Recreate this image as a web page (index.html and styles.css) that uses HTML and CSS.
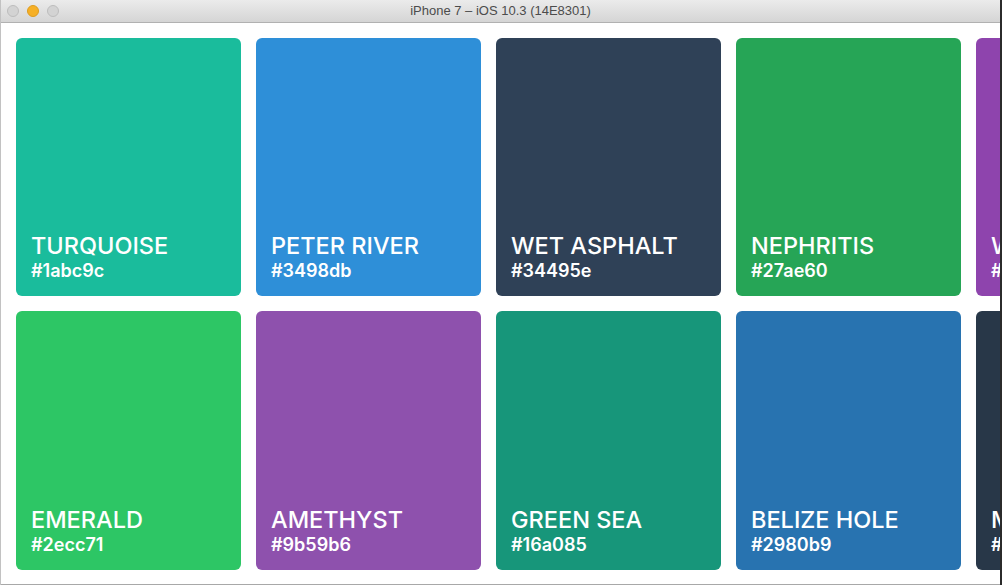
FILE: index.html
```html
<!DOCTYPE html>
<html>
<head>
<meta charset="utf-8">
<title>Flat UI Colors</title>
<link rel="stylesheet" href="styles.css">
</head>
<body>
<div class="window">
  <div class="titlebar">
    <div class="lights">
      <span class="light"></span>
      <span class="light active"></span>
      <span class="light"></span>
    </div>
    <div class="title">iPhone 7 – iOS 10.3 (14E8301)</div>
  </div>
  <div class="content">
    <div class="grid">
      <div class="card turquoise"><div class="name">TURQUOISE</div><div class="hex">#1abc9c</div></div>
      <div class="card peter-river"><div class="name">PETER RIVER</div><div class="hex">#3498db</div></div>
      <div class="card wet-asphalt"><div class="name">WET ASPHALT</div><div class="hex">#34495e</div></div>
      <div class="card nephritis"><div class="name">NEPHRITIS</div><div class="hex">#27ae60</div></div>
      <div class="card wisteria"><div class="name">WISTERIA</div><div class="hex">#8e44ad</div></div>
      <div class="card emerald"><div class="name">EMERALD</div><div class="hex">#2ecc71</div></div>
      <div class="card amethyst"><div class="name">AMETHYST</div><div class="hex">#9b59b6</div></div>
      <div class="card green-sea"><div class="name">GREEN SEA</div><div class="hex">#16a085</div></div>
      <div class="card belize-hole"><div class="name">BELIZE HOLE</div><div class="hex">#2980b9</div></div>
      <div class="card midnight-blue"><div class="name">MIDNIGHT BLUE</div><div class="hex">#2c3e50</div></div>
    </div>
  </div>
</div>
</body>
</html>
```

FILE: styles.css
```css
html, body {
  margin: 0;
  padding: 0;
  width: 1002px;
  height: 585px;
  overflow: hidden;
  background: #ffffff;
}

.window {
  box-sizing: border-box;
  width: 1002px;
  height: 585px;
  display: flex;
  flex-direction: column;
  border-left: 1px solid #c2c2c2;
  border-right: 2px solid #2b2b2b;
  background: #ffffff;
}

.titlebar {
  position: relative;
  flex: 0 0 22px;
  height: 22px;
  background: linear-gradient(#ebebeb, #d5d5d5);
  border-bottom: 1px solid #b1b1b1;
  display: flex;
  align-items: center;
  justify-content: center;
}

.lights {
  position: absolute;
  left: 6px;
  top: 5px;
  display: flex;
  gap: 8px;
}

.light {
  box-sizing: border-box;
  width: 12px;
  height: 12px;
  border-radius: 50%;
  background: #d3d3d3;
  border: 1px solid #bdbdbd;
}

.light.active {
  background: #f6b026;
  border-color: #de9c1f;
}

.title {
  font-family: "Liberation Sans", Arial, sans-serif;
  font-size: 13px;
  color: #4c4c4c;
  line-height: 22px;
}

.content {
  flex: 1;
  overflow: hidden;
  padding: 15px 0 0 15px;
  border-bottom: 1px solid #a8a8a8;
}

.grid {
  display: grid;
  grid-template-columns: repeat(5, 225px);
  grid-template-rows: 258px 259px;
  gap: 15px;
}

.card {
  border-radius: 6px;
  display: flex;
  flex-direction: column;
  justify-content: flex-end;
  padding: 0 15px 15px 15px;
  color: #ffffff;
  font-family: Inter, "Noto Sans", sans-serif;
  min-width: 0;
  white-space: nowrap;
}

.name {
  font-size: 23.5px;
  font-weight: 500;
  line-height: 28px;
}

.hex {
  font-size: 18px;
  font-weight: 600;
  line-height: 21px;
}

.turquoise { background: #1abc9c; }
.peter-river { background: #2e8fd8; }
.wet-asphalt { background: #2f4157; }
.nephritis { background: #26a556; }
.wisteria { background: #8e44ad; }
.emerald { background: #2dc665; }
.amethyst { background: #8e51ad; }
.green-sea { background: #17967a; }
.belize-hole { background: #2873b0; }
.midnight-blue { background: #283748; }
```
